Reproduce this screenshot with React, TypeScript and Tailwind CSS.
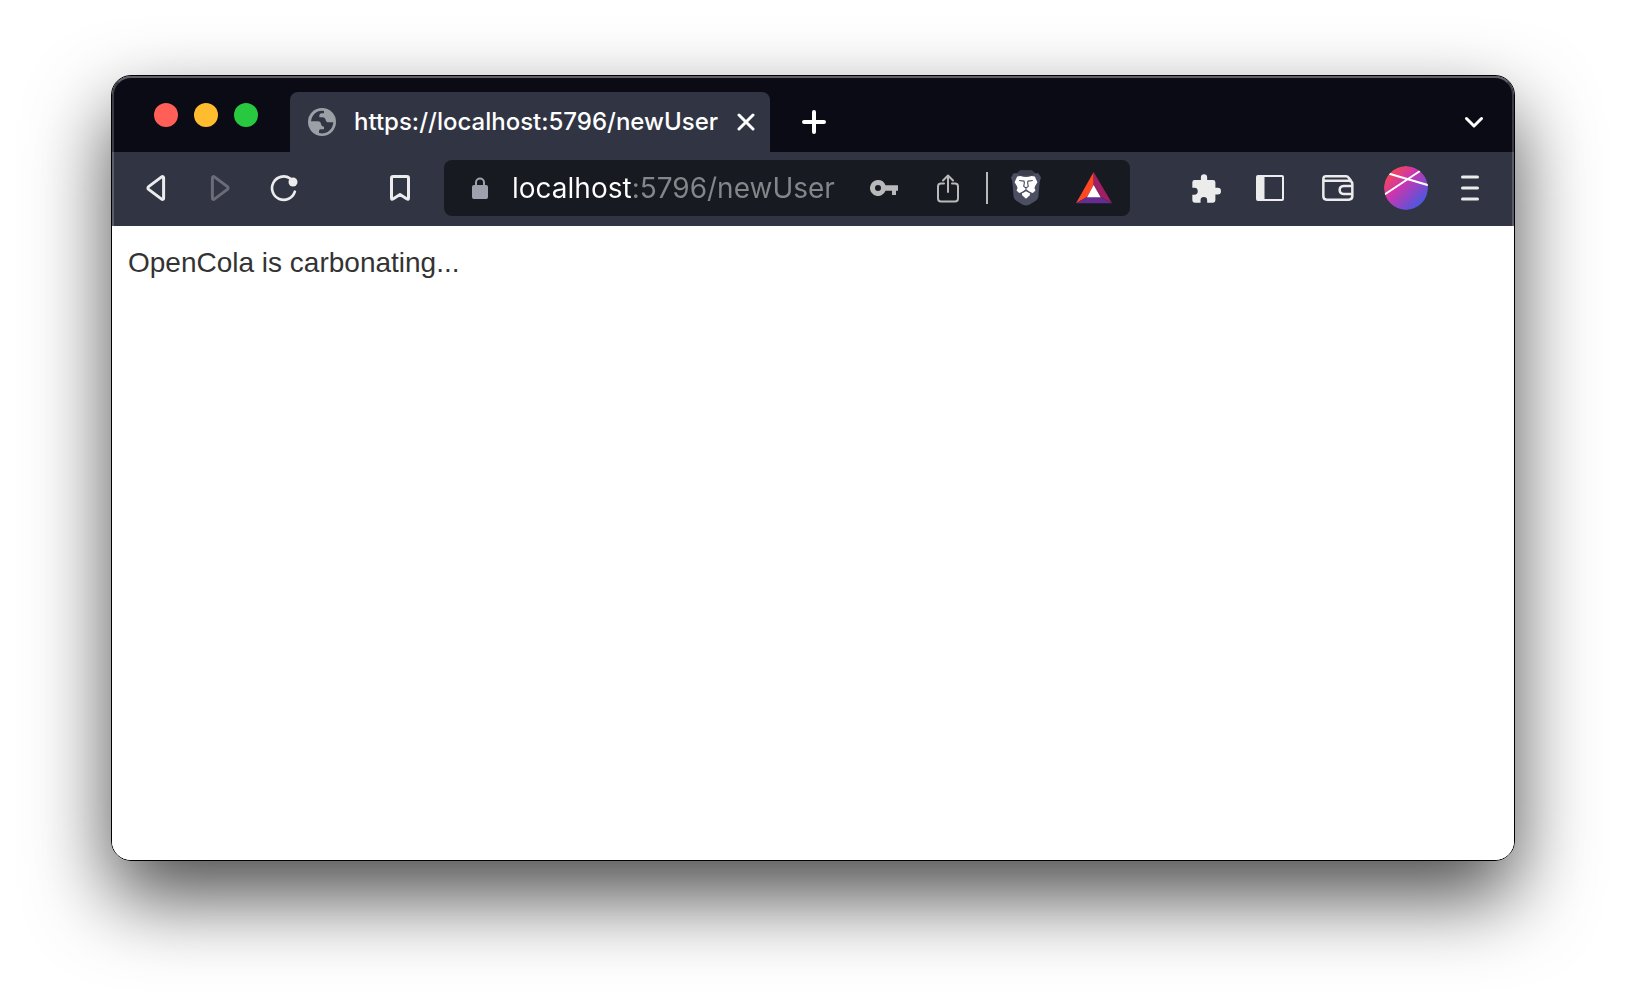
import React from "react";

function BackIcon() {
  return (
    <svg width="20" height="26" viewBox="0 0 20 26" fill="none" stroke="currentColor" strokeWidth="3" strokeLinejoin="round">
      <path d="M15.6 1.9 2.6 11.6a1.8 1.8 0 0 0 0 2.8l13 9.7q2 1 2-1.2V3.1q0-2.200-2-1.200z" />
    </svg>
  );
}

function ReloadIcon() {
  return (
    <svg width="28" height="28" viewBox="512 326 84 84">
      <path d="M586.500 379A35 35 0 1 1 572 339" fill="none" stroke="currentColor" strokeWidth="8" strokeLinecap="round" />
      <circle cx="581" cy="350" r="13.500" fill="currentColor" />
    </svg>
  );
}

function BookmarkIcon() {
  return (
    <svg width="20" height="26" viewBox="0 0 20 26" fill="none" stroke="currentColor" strokeWidth="3" strokeLinejoin="round">
      <path d="M3 1.500h14q1.500 0 1.500 1.500v20q0 1.800-1.500 1L10 19.500 3 24q-1.500.8-1.500-1V3q0-1.500 1.500-1.500z" />
    </svg>
  );
}

function GlobeIcon() {
  return (
    <svg width="28" height="28" viewBox="0 0 84 84">
      <circle cx="42" cy="42" r="42" fill="#9aa0a6" />
      <path
        d="M48 9C28 5 12 19 9 40h21q9 1 9 9 1 7 9 7v8h-10q-5 0-5 5v6q14 4 26-3Q75 61 76 43H62q-8 0-9-8-2-7-10-7h-9v-6q1-6 7-6h7z"
        fill="#313443"
      />
    </svg>
  );
}

function LockIcon() {
  return (
    <svg width="16" height="22" viewBox="0 0 16 22">
      <path d="M4 9V5.500a4 4 0 0 1 8 0V9" fill="none" stroke="#9da1ab" strokeWidth="2" />
      <rect y="8" width="16" height="14" rx="2" fill="#9da1ab" />
    </svg>
  );
}

function KeyIcon() {
  return (
    <svg width="28" height="16" viewBox="0 0 28 16" fill="currentColor">
      <path d="M8 0a8 8 0 1 0 7.500 10.700H22V15h4v-4.300h2V5.300H15.500A8 8 0 0 0 8 0zm0 5a3 3 0 1 1 0 6 3 3 0 0 1 0-6z" fillRule="evenodd" />
    </svg>
  );
}

function ShareIcon() {
  return (
    <svg width="22" height="29" viewBox="0 0 22 29" fill="none" stroke="currentColor" strokeWidth="2" strokeLinecap="round" strokeLinejoin="round">
      <path d="M7 9.500H4Q1 9.500 1 12.500v12q0 3 3 3h14q3 0 3-3v-12q0-3-3-3h-3M11 18V1.800M6 6.500l5-5 5 5" />
    </svg>
  );
}

function LionIcon() {
  return (
    <svg width="30" height="36" viewBox="271 315 92 108">
      <path d="M299 315h36l10 9h10l8 13-4 12-4 47q-2 7-7 11l-21 13q-10 5-20 0l-21-13q-5-4-7-11l-4-47-4-12 8-13h10z" fill="#4c4f61" />
      <path d="M299 315h36l10 9-10 7h-36l-10-7z" fill="#3d3f4f" />
      <path
        d="M290 334l10-2q8 3 17 3t17-3l10 2 8 17-7 12-2 6 3 8-8 7-10-3-11-7-11 7-10 3-8-7 3-8-2-6-7-12z"
        fill="#fff"
      />
      <path d="M317 379l13 7-2 6-11 10-11-10-2-6z" fill="#fff" />
      <path d="M296 346l15 2 1 5-2 11 7 5 7-5-2-11 1-5 15-2M317 368v7M303 384l14-9 14 9" fill="none" stroke="#4c4f61" strokeWidth="3.500" strokeLinejoin="round" />
    </svg>
  );
}

function BatIcon() {
  return (
    <svg width="36" height="32" viewBox="0 0 108 96">
      <path d="M53 0 0 94l33-19 20-36z" fill="#ff4724" />
      <path d="M53 0v39l21 36 34 19z" fill="#9e1f63" />
      <path d="M0 94h108L74 75H33z" fill="#662d91" />
      <path d="M53 39 33 76h41z" fill="#fff" />
    </svg>
  );
}

function PuzzleIcon() {
  return (
    <svg width="29" height="29" viewBox="97 323 86 88" fill="currentColor">
      <path d="M123 341v-8a9.500 9.500 0 0 1 19 0v8h18q7 0 7 7v17h7a9.500 9.500 0 0 1 0 20h-7v18q0 7-7 7h-18v-7a9.500 9.500 0 0 0-20 0v7h-18q-7 0-7-7v-17h6a10 10 0 0 0 0-21h-6v-17q0-7 7-7z" />
    </svg>
  );
}

function SidebarIcon() {
  return (
    <svg width="28" height="26" viewBox="0 0 28 26">
      <path d="M2 0h24q2 0 2 2v22q0 2-2 2H2q-2 0-2-2V2q0-2 2-2zm6.500 2v22H26V2z" fill="currentColor" fillRule="evenodd" />
    </svg>
  );
}

function WalletIcon() {
  return (
    <svg width="32" height="26" viewBox="486 332 96 78" fill="none" stroke="currentColor" strokeWidth="7.500" strokeLinejoin="round" strokeLinecap="round">
      <path d="M490 344q0-8 8-8h60q5 0 8 4l6 8M490 344v52q0 10 10 10h66q11 0 11-10v-37q0-10-11-10h-70q-6 0-6-5zM577 365h-26q-12 1-12 12t12 12h26" />
    </svg>
  );
}

function Avatar() {
  return (
    <svg width="44" height="44" viewBox="672 303 132 132">
      <defs>
        <linearGradient id="avatar-fill" x1="0.1" y1="0.1" x2="0.85" y2="0.85">
          <stop offset="0" stopColor="#fa4a4a" />
          <stop offset="0.42" stopColor="#cb35af" />
          <stop offset="1" stopColor="#4a58e0" />
        </linearGradient>
        <clipPath id="avatar-clip">
          <circle cx="738" cy="369" r="66" />
        </clipPath>
      </defs>
      <g clipPath="url(#avatar-clip)">
        <circle cx="738" cy="369" r="66" fill="url(#avatar-fill)" />
        <path d="M670 391 780 318M688 326l118 35" stroke="#fff" strokeWidth="6" />
      </g>
    </svg>
  );
}

function ToolButton({ label, className = "w-16", children }: { label: string; className?: string; children: React.ReactNode }) {
  return (
    <button type="button" aria-label={label} className={`flex h-11 shrink-0 items-center justify-center ${className}`}>
      {children}
    </button>
  );
}

function TabStrip() {
  return (
    <header className="flex h-[76px] items-end bg-[#0b0b15]">
      <div className="mb-[25px] ml-[42px] flex gap-4">
        <button type="button" aria-label="Close window" className="size-6 rounded-full bg-[#ff5f57]" />
        <button type="button" aria-label="Minimize window" className="size-6 rounded-full bg-[#febc2e]" />
        <button type="button" aria-label="Zoom window" className="size-6 rounded-full bg-[#28c840]" />
      </div>
      <div className="ml-8 flex h-[60px] w-[480px] items-center rounded-t-lg bg-[#313443] pl-[18px]">
        <GlobeIcon />
        <span className="ml-[18px] flex-1 whitespace-nowrap font-['Inter'] text-2xl font-medium text-white">
          https://localhost:5796/newUser
        </span>
        <ToolButton label="Close tab" className="w-12">
          <svg width="18" height="18" viewBox="0 0 18 18" stroke="#fff" strokeWidth="3" strokeLinecap="round">
            <path d="M2 2l14 14M16 2 2 16" />
          </svg>
        </ToolButton>
      </div>
      <div className="flex h-[60px] flex-1 items-center justify-between pl-3 pr-2">
        <ToolButton label="New tab">
          <svg width="24" height="24" viewBox="0 0 24 24" stroke="#fff" strokeWidth="4" strokeLinecap="round">
            <path d="M12 2v20M2 12h20" />
          </svg>
        </ToolButton>
        <ToolButton label="Search tabs">
          <svg width="20" height="12" viewBox="0 0 20 12" fill="none" stroke="#fff" strokeWidth="3" strokeLinecap="round" strokeLinejoin="round">
            <path d="M2.500 2.500l7.500 7.500 7.500-7.500" />
          </svg>
        </ToolButton>
      </div>
    </header>
  );
}

function AddressBar() {
  return (
    <form className="ml-3 flex h-14 min-w-0 flex-1 items-center rounded-lg bg-[#181a22] pl-7 text-[#b9b9ba]">
      <LockIcon />
      <input
        type="text"
        aria-label="Address"
        defaultValue="localhost:5796/newUser"
        className="ml-6 min-w-0 flex-1 bg-[linear-gradient(to_right,#ffffff_119px,#85868a_119px)] bg-clip-text font-['Inter'] text-[28px] leading-9 text-white outline-none [-webkit-text-fill-color:transparent]"
      />
      <ToolButton label="Passwords">
        <KeyIcon />
      </ToolButton>
      <ToolButton label="Share">
        <ShareIcon />
      </ToolButton>
      <div className="mx-1.5 h-8 w-0.5 bg-[#b9b9ba]" />
      <ToolButton label="Shields">
        <LionIcon />
      </ToolButton>
      <ToolButton label="Rewards" className="w-[72px]">
        <BatIcon />
      </ToolButton>
    </form>
  );
}

function Toolbar() {
  return (
    <nav className="flex h-[74px] items-center bg-[#313443] px-3 pb-0.5 text-[#ececec]">
      <ToolButton label="Back">
        <BackIcon />
      </ToolButton>
      <ToolButton label="Forward" className="w-16 rotate-180 text-[#6a6c78]">
        <BackIcon />
      </ToolButton>
      <ToolButton label="Reload">
        <ReloadIcon />
      </ToolButton>
      <ToolButton label="Bookmark" className="ml-[52px] w-16">
        <BookmarkIcon />
      </ToolButton>
      <AddressBar />
      <ToolButton label="Extensions" className="ml-11 w-16">
        <PuzzleIcon />
      </ToolButton>
      <ToolButton label="Sidebar">
        <SidebarIcon />
      </ToolButton>
      <ToolButton label="Wallet" className="w-[72px]">
        <WalletIcon />
      </ToolButton>
      <ToolButton label="Profile">
        <Avatar />
      </ToolButton>
      <ToolButton label="Menu">
        <svg width="18" height="26" viewBox="0 0 18 26" stroke="currentColor" strokeWidth="3" strokeLinecap="round">
          <path d="M1.500 2h15M1.500 13h15M1.500 24h15" />
        </svg>
      </ToolButton>
    </nav>
  );
}

export default function App() {
  return (
    <div className="flex min-h-screen flex-col bg-white px-[111px] pb-[147px] pt-[75px]">
      <div className="flex flex-1 flex-col rounded-[20px] border border-black shadow-[0_36px_80px_rgba(0,0,0,0.7)]">
        <div className="relative overflow-hidden rounded-t-[19px]">
          <TabStrip />
          <Toolbar />
          <div className="pointer-events-none absolute inset-0 rounded-t-[19px] border-x-2 border-t-2 border-x-white/20 border-t-white/35" />
        </div>
        <main className="flex-1 rounded-b-[19px] bg-white px-4 py-5">
          <p className="font-['Liberation_Sans'] text-[28px] leading-[34px] text-[#333333]">OpenCola is carbonating...</p>
        </main>
      </div>
    </div>
  );
}
